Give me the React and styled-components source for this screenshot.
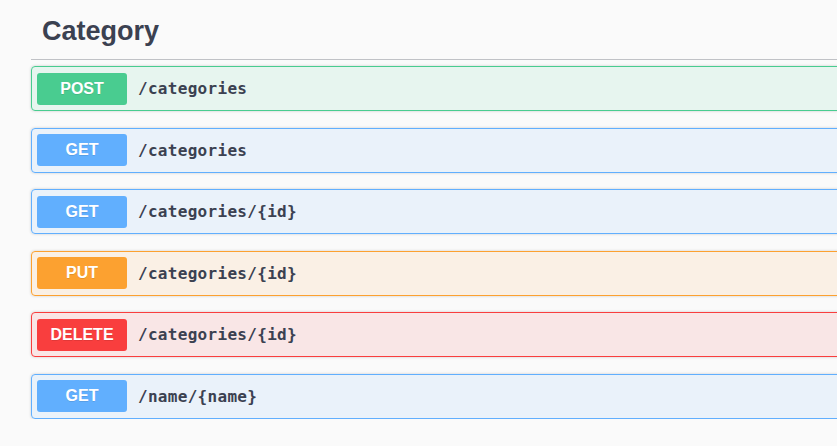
import React from "react";
import styled, { createGlobalStyle } from "styled-components";

const GlobalStyle = createGlobalStyle`
  html, body {
    margin: 0;
    padding: 0;
    background: #fafafa;
    overflow: hidden;
  }
`;

const methodColors = {
  post: "73, 204, 144",
  get: "97, 175, 254",
  put: "252, 161, 48",
  delete: "249, 62, 62",
};

const Page = styled.div`
  width: 1100px;
  padding: 0 0 0 31px;
`;

const TagHeading = styled.h3`
  margin: 0;
  height: 60px;
  box-sizing: border-box;
  padding: 15px 0 0 11px;
  border-bottom: 1px solid rgba(59, 65, 81, 0.3);
  font-family: "Liberation Sans", Arial, sans-serif;
  font-size: 27px;
  font-weight: 700;
  line-height: 32px;
  color: #3b4151;
`;

const OpList = styled.div`
  display: flex;
  flex-direction: column;
  gap: 16.6px;
  padding-top: 6px;
`;

const OpBlock = styled.div`
  display: flex;
  align-items: center;
  height: 45px;
  box-sizing: border-box;
  padding: 0 5px;
  border: 1px solid rgb(${(p) => methodColors[p.$method]});
  border-radius: 4px;
  background: rgba(${(p) => methodColors[p.$method]}, 0.1);
  box-shadow: 0 0 3px rgba(0, 0, 0, 0.19);
`;

const Method = styled.span`
  width: 90px;
  height: 32px;
  flex-shrink: 0;
  display: flex;
  align-items: center;
  justify-content: center;
  border-radius: 3px;
  background: rgb(${(p) => methodColors[p.$method]});
  color: #fff;
  font-family: "Liberation Sans", Arial, sans-serif;
  font-size: 16px;
  font-weight: 700;
  text-shadow: 0 1px 0 rgba(0, 0, 0, 0.1);
`;

const Path = styled.span`
  margin-left: 11px;
  font-family: "DejaVu Sans Mono", "Liberation Mono", monospace;
  font-size: 16px;
  font-weight: 700;
  letter-spacing: 0.3px;
  color: #3b4151;
`;

const ops = [
  { method: "post", path: "/categories" },
  { method: "get", path: "/categories" },
  { method: "get", path: "/categories/{id}" },
  { method: "put", path: "/categories/{id}" },
  { method: "delete", path: "/categories/{id}" },
  { method: "get", path: "/name/{name}" },
];

const App = () => (
  <Page>
    <GlobalStyle />
    <TagHeading>Category</TagHeading>
    <OpList>
      {ops.map((op, i) => (
        <OpBlock key={i} $method={op.method}>
          <Method $method={op.method}>{op.method.toUpperCase()}</Method>
          <Path>{op.path}</Path>
        </OpBlock>
      ))}
    </OpList>
  </Page>
);

export default App;
